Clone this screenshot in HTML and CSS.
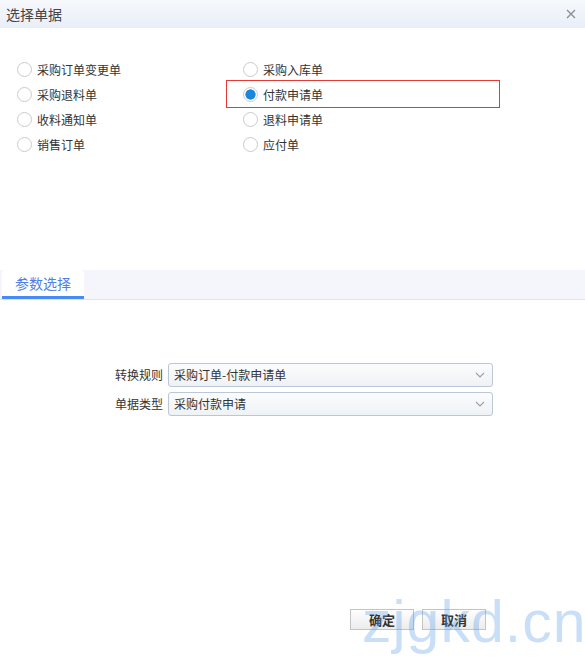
FILE: index.html
```html
<!doctype html>
<html>
<head>
<meta charset="UTF-8">
<title>选择单据</title>
<link rel="stylesheet" href="styles.css">
</head>
<body>
<div class="dlg">
    <div class="dlg-hd">
        <span class="dlg-title">选择单据</span>
        <span class="dlg-close">
            <svg width="10" height="10" viewBox="0 0 10 10"><path d="M1 1L9 9M9 1L1 9" stroke="#8a8d93" stroke-width="1.3" fill="none"/></svg>
        </span>
    </div>

    <ul class="bills">
        <li><i class="radio"></i>采购订单变更单</li>
        <li><i class="radio"></i>采购入库单</li>
        <li><i class="radio"></i>采购退料单</li>
        <li class="sel"><i class="radio on"></i>付款申请单</li>
        <li><i class="radio"></i>收料通知单</li>
        <li><i class="radio"></i>退料申请单</li>
        <li><i class="radio"></i>销售订单</li>
        <li><i class="radio"></i>应付单</li>
    </ul>

    <div class="tabs">
        <span class="tab current">参数选择</span>
    </div>

    <div class="params">
        <label>转换规则</label>
        <div class="combo">采购订单-付款申请单<svg class="arr" width="10" height="6" viewBox="0 0 10 6"><path d="M1 1L5 5L9 1" stroke="#9aa0a8" stroke-width="1.1" fill="none"/></svg></div>
        <label>单据类型</label>
        <div class="combo">采购付款申请<svg class="arr" width="10" height="6" viewBox="0 0 10 6"><path d="M1 1L5 5L9 1" stroke="#9aa0a8" stroke-width="1.1" fill="none"/></svg></div>
    </div>

    <div class="dlg-ft">
        <button class="btn">确定</button>
        <button class="btn">取消</button>
    </div>

    <div class="mark">zjgkd.cn</div>
</div>
</body>
</html>
```

FILE: styles.css
```css
body,div,ul,li{margin:0;padding:0;}
ul{list-style-type:none;}
body{background:#fff;font:12px/1 "Noto Sans CJK SC","Liberation Sans",sans-serif;color:#333;}

.dlg{position:relative;width:585px;height:659px;display:flex;flex-direction:column;overflow:hidden;background:#fff;}

.dlg-hd{height:28px;display:flex;align-items:center;justify-content:space-between;padding:0 9px 0 6px;background:linear-gradient(#f6f8fc,#e9eef8);}
.dlg-title{font-size:14px;color:#444;}
.dlg-close{display:flex;width:10px;height:10px;}

.bills{display:grid;grid-template-columns:226px 274px;margin-top:29px;}
.bills li{position:relative;height:25px;display:flex;align-items:center;padding-left:17px;font-size:12px;color:#333;}
.bills li.sel:after{content:"";position:absolute;left:0;right:0;top:-2px;bottom:-1px;border:1px solid #e53935;}
.radio{width:15px;height:15px;box-sizing:border-box;border:1px solid #cbcbcb;border-radius:50%;margin-right:5px;background:#fff;}
.radio.on{border-color:#c5cbd3;background:radial-gradient(circle,#1a86dc 0,#1a86dc 4.8px,#fff 5.4px);}

.tabs{margin-top:113px;height:29px;display:flex;align-items:flex-end;background:#f4f6fb;border-bottom:1px solid #dfe3ec;}
.tab{width:82px;height:29px;box-sizing:border-box;margin-left:2px;display:flex;align-items:center;justify-content:center;font-size:14px;color:#4f80e6;background:#fff;border-radius:4px 4px 0 0;border-bottom:3px solid #4a8af4;}

.params{display:grid;grid-template-columns:48px 325px;column-gap:5px;row-gap:5px;margin:63px 0 0 115px;align-items:center;}
.params label{font-size:12px;color:#333;text-align:right;}
.combo{height:24px;box-sizing:border-box;display:flex;align-items:center;justify-content:space-between;padding:0 7px 0 5px;border:1px solid #bcc7d5;border-radius:3px;background:linear-gradient(#fbfcfd,#eff2f5);font-size:12px;color:#333;}

.dlg-ft{margin-top:auto;display:flex;justify-content:flex-end;gap:8px;padding:0 99px 29px 0;}
.btn{width:64px;height:21px;padding:0;border:1px solid #c4c4c4;background:linear-gradient(#fefefe,#ececec);font:bold 13px/1 "Noto Sans CJK SC",sans-serif;color:#333;}

.mark{position:absolute;left:362px;top:593px;font:59px/1 "Liberation Sans",Arial,sans-serif;letter-spacing:1px;color:rgba(90,155,230,0.33);pointer-events:none;}
```
